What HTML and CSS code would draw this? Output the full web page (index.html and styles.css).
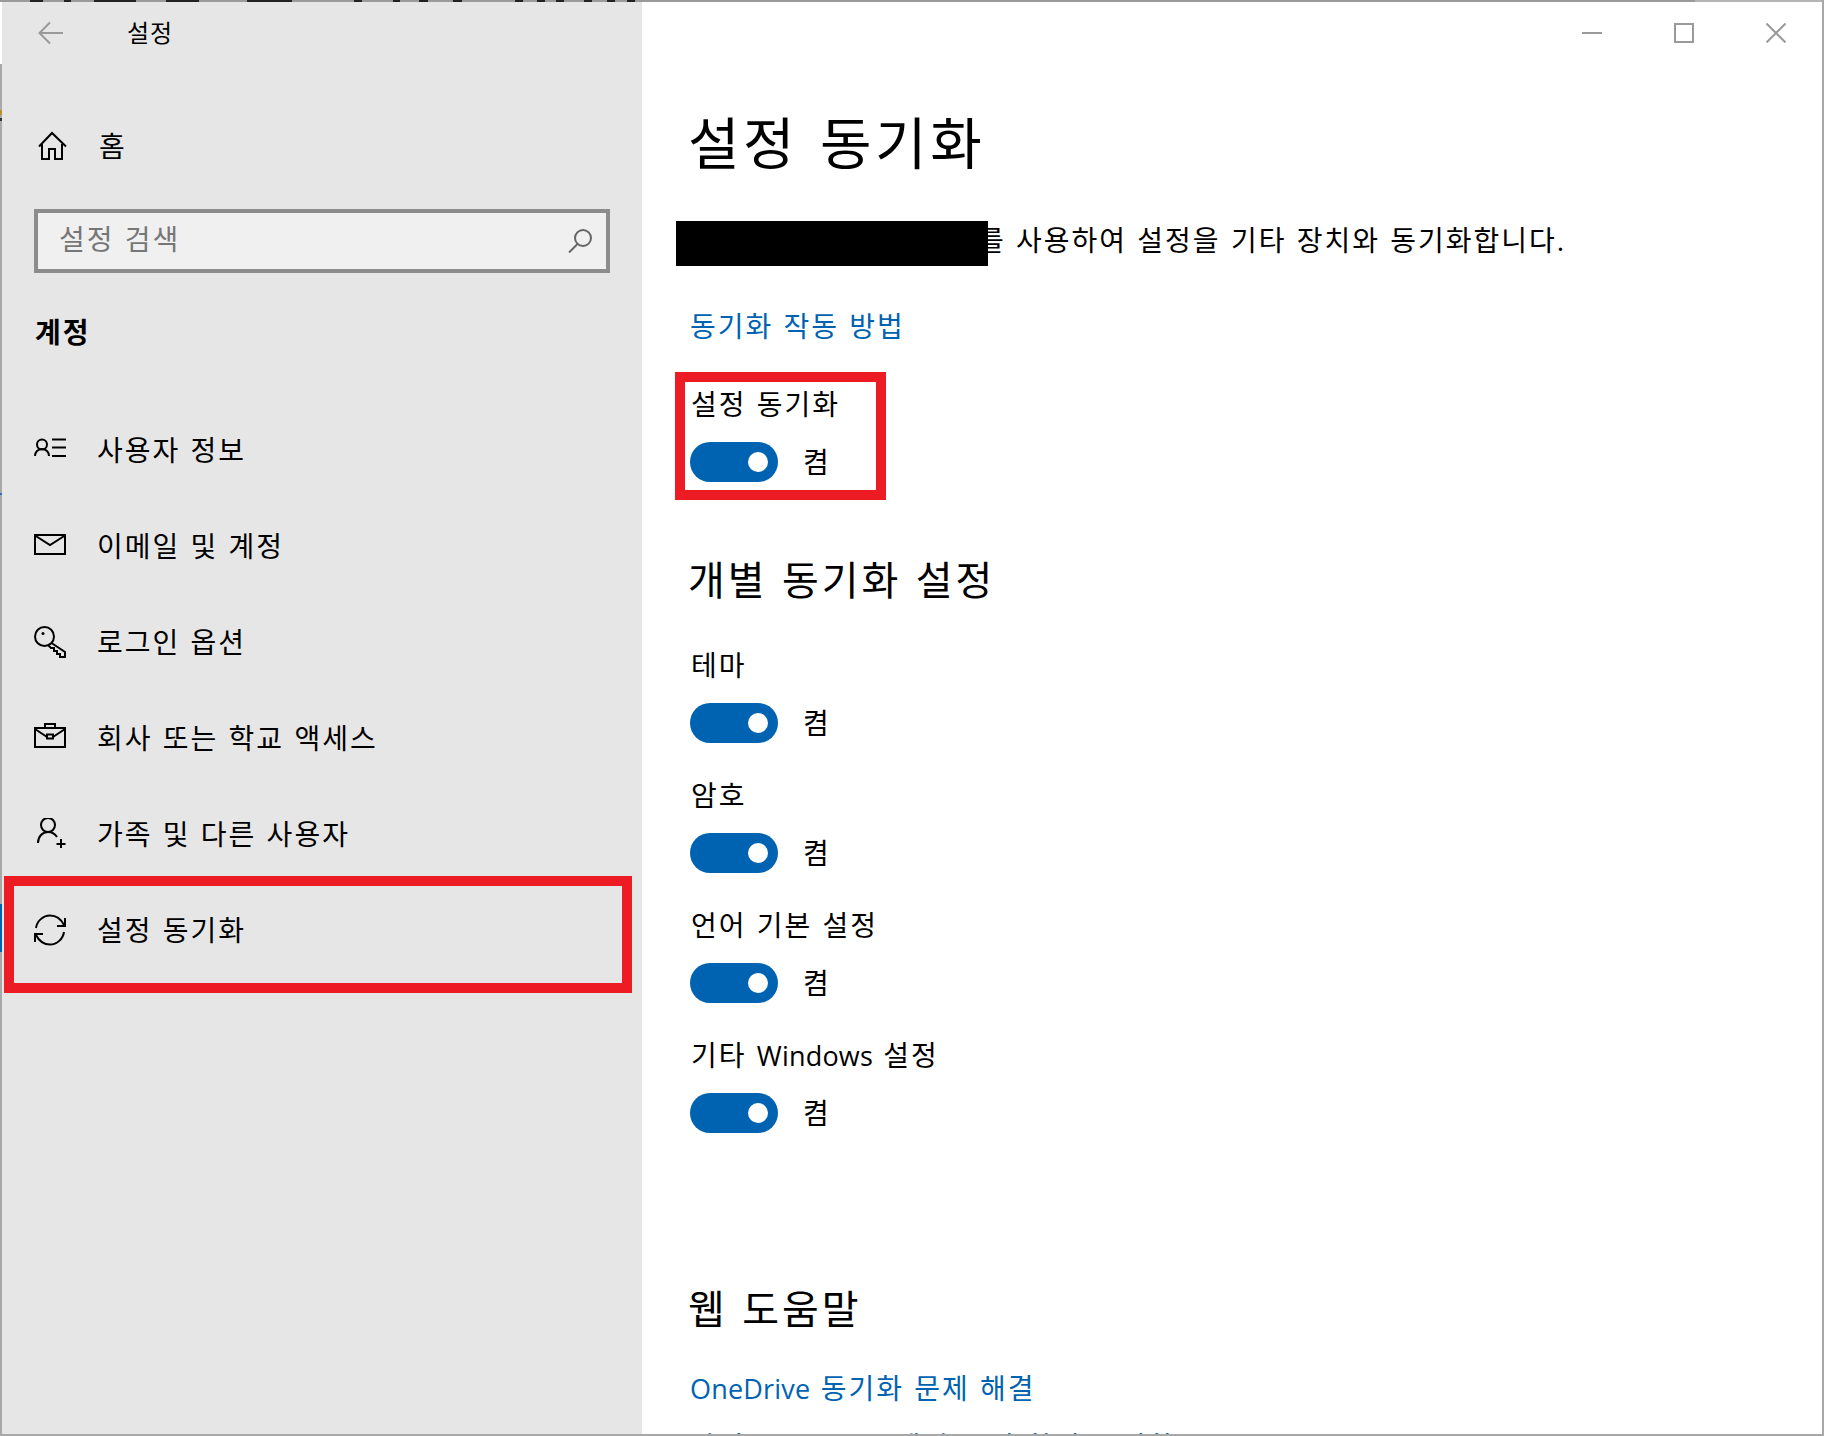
FILE: index.html
```html
<!DOCTYPE html>
<html lang="ko">
<head>
<meta charset="utf-8">
<title>설정</title>
<link rel="stylesheet" href="styles.css">
</head>
<body>
<div class="window">
  <div class="top-edge"></div>
  <div class="left-edge"><div class="left-white"></div><div class="left-gray"></div></div>
  <aside class="sidebar">
    <div class="titlebar">
      <svg class="back" viewBox="0 0 26 24"><path d="M25 12H2M12 1.500 1.500 12 12 22.500"/></svg>
      <span class="app-title">설정</span>
    </div>
    <div class="home-row">
      <svg class="icon" viewBox="0 0 32 32"><path d="M3 16.500 16 3l14 13.500M6 14v15h7V19h6v10h7V14"/></svg>
      <span class="nav-label">홈</span>
    </div>
    <div class="search">
      <span class="search-text">설정 검색</span>
      <svg class="search-icon" viewBox="0 0 24 24"><circle cx="15" cy="9" r="8"/><path d="M9.500 15 1 23.500"/></svg>
    </div>
    <h2 class="group-title">계정</h2>
    <nav class="nav">
      <div class="nav-item">
        <svg class="icon" viewBox="0 0 32 32"><circle cx="8" cy="10.500" r="5"/><path d="M1 22c0-4 3-7 7-7s7 3 7 7M18 5.500h14M18 13.500h14M18 22h14"/></svg>
        <span class="nav-label">사용자 정보</span>
      </div>
      <div class="nav-item">
        <svg class="icon" viewBox="0 0 32 32"><rect x="1" y="5" width="30" height="19"/><path d="M1 5.500 16 15 31 5.500"/></svg>
        <span class="nav-label">이메일 및 계정</span>
      </div>
      <div class="nav-item">
        <svg class="icon" viewBox="0 0 32 32"><circle cx="10.500" cy="10.500" r="9.500"/><circle class="dot" cx="9" cy="7.500" r="1.500"/><path d="M17.500 17 31 26v5h-5v-3h-3v-3h-3v-3h-3l-3-3"/></svg>
        <span class="nav-label">로그인 옵션</span>
      </div>
      <div class="nav-item">
        <svg class="icon" viewBox="0 0 32 32"><rect x="1" y="6" width="30" height="19"/><path d="M11 6V2h10v4M1 7l12 8M31 7l-12 8"/><rect x="13" y="12.500" width="6" height="4"/></svg>
        <span class="nav-label">회사 또는 학교 액세스</span>
      </div>
      <div class="nav-item">
        <svg class="icon" viewBox="0 0 32 32"><circle cx="14" cy="7" r="7"/><path d="M4 25c0-6 4-11 10-11 4 0 7 2 9 5M27 21v9M22.500 26h9"/></svg>
        <span class="nav-label">가족 및 다른 사용자</span>
      </div>
      <div class="nav-item active">
        <svg class="icon" viewBox="0 0 32 32"><path d="M2 14C3 7 9 1.500 16 1.500c6 0 11 3.500 14 9.500M31 4v8h-8M30 18c-1 7-7 12.500-14 12.500-6 0-11-3.500-14-9.500M1 28v-8h8"/></svg>
        <span class="nav-label">설정 동기화</span>
      </div>
    </nav>
  </aside>
  <main class="content">
    <div class="captions">
      <svg class="cap" viewBox="0 0 20 20"><path d="M0 10h20"/></svg>
      <svg class="cap" viewBox="0 0 20 20"><rect x="1" y="1" width="18" height="18"/></svg>
      <svg class="cap" viewBox="0 0 20 20"><path d="M.500.500l19 19M19.500.500l-19 19"/></svg>
    </div>
    <h1 class="page-title">설정 동기화</h1>
    <div class="desc">
      <div class="redact"></div>
      <span class="desc-text">를 사용하여 설정을 기타 장치와 동기화합니다.</span>
    </div>
    <a class="link first-link">동기화 작동 방법</a>
    <div class="master">
      <div class="field-label">설정 동기화</div>
      <div class="toggle-row"><span class="toggle"><span class="knob"></span></span><span class="toggle-text">켬</span></div>
    </div>
    <h2 class="section-title section-sync">개별 동기화 설정</h2>
    <div class="field field-first">
      <div class="field-label">테마</div>
      <div class="toggle-row"><span class="toggle"><span class="knob"></span></span><span class="toggle-text">켬</span></div>
    </div>
    <div class="field">
      <div class="field-label">암호</div>
      <div class="toggle-row"><span class="toggle"><span class="knob"></span></span><span class="toggle-text">켬</span></div>
    </div>
    <div class="field">
      <div class="field-label">언어 기본 설정</div>
      <div class="toggle-row"><span class="toggle"><span class="knob"></span></span><span class="toggle-text">켬</span></div>
    </div>
    <div class="field">
      <div class="field-label">기타 <span class="latin">Windows</span> 설정</div>
      <div class="toggle-row"><span class="toggle"><span class="knob"></span></span><span class="toggle-text">켬</span></div>
    </div>
    <h2 class="section-title section-help">웹 도움말</h2>
    <a class="link help-link"><span class="latin">OneDrive</span> 동기화 문제 해결</a>
    <a class="link next-link">마이크로소프트 에지 즐겨 찾기 동기화</a>
  </main>
  <div class="right-edge"></div>
  <div class="bottom-edge"></div>
</div>
</body>
</html>
```

FILE: styles.css
```css
*, *::after { box-sizing: border-box; }
html, body { margin: 0; padding: 0; background: #fff; }
body {
  font-family: "Open Sans", "Noto Sans CJK KR", sans-serif;
  color: #000;
  overflow: hidden;
}
.window {
  position: relative;
  display: flex;
  width: 1824px;
  height: 1436px;
  overflow: hidden;
  background: #fff;
}
.top-edge {
  position: absolute;
  top: 0; left: 0; right: 0;
  height: 2px;
  z-index: 3;
  background:
    linear-gradient(90deg,
      #9a9a9a 0 30px, #222 30px 43px, #9a9a9a 43px 64px, #222 64px 71px, #9a9a9a 71px 94px,
      #222 94px 136px, #9a9a9a 136px 166px, #222 166px 199px, #9a9a9a 199px 247px, #222 247px 292px,
      #9a9a9a 292px 354px, #222 354px 362px, #9a9a9a 362px 393px, #222 393px 400px, #9a9a9a 400px 419px,
      #222 419px 428px, #9a9a9a 428px 453px, #222 453px 462px, #9a9a9a 462px 515px, #222 515px 523px,
      #9a9a9a 523px 537px, #222 537px 545px, #9a9a9a 545px 556px, #222 556px 564px, #9a9a9a 564px 584px,
      #222 584px 592px, #9a9a9a 592px 607px, #222 607px 615px, #9a9a9a 615px 627px, #222 627px 635px,
      #9a9a9a 635px 1695px, #b4b4b4 1695px 100%);
}
.left-edge { flex: 0 0 2px; display: flex; flex-direction: column; }
.left-white { height: 64px; background: #fff; }
.left-gray {
  flex: 1;
  background:
    linear-gradient(180deg,
      #a8a8a8 0 46px, #b8912f 46px 51px, #a8a8a8 51px 54px, #333 54px 57px, #a8a8a8 57px 429px,
      #2a6fb5 429px 431px, #a8a8a8 431px 840px, #0063b1 840px 888px, #a8a8a8 888px);
}
.right-edge {
  position: absolute;
  top: 0; right: 0; bottom: 0;
  width: 2px;
  background: #a8a8a8;
  z-index: 3;
}
.bottom-edge {
  position: absolute;
  left: 0; right: 0; bottom: 0;
  height: 2px;
  background: #a8a8a8;
  z-index: 3;
}

/* sidebar */
.sidebar {
  flex: 0 0 640px;
  background: #e6e6e6;
  display: flex;
  flex-direction: column;
}
.sidebar > * { flex: none; }
.titlebar {
  height: 64px;
  display: flex;
  align-items: center;
  padding-left: 36px;
  padding-top: 2px;
}
.back {
  width: 26px; height: 24px;
  fill: none; stroke: #999; stroke-width: 2;
  margin-right: 63px;
}
.app-title { font-size: 24px; line-height: 32px; letter-spacing: 1px; }
.icon {
  flex: none;
  width: 32px; height: 32px;
  fill: none; stroke: #000; stroke-width: 2;
}
.icon .dot { fill: #000; stroke: none; }
.home-row {
  margin-top: 34px;
  height: 96px;
  display: flex;
  align-items: center;
  padding-left: 34px;
}
.nav-label { font-size: 28px; line-height: 40px; margin-left: 31px; letter-spacing: 2px; word-spacing: 1px; }
.search {
  margin: 15px 0 0 32px;
  width: 576px;
  height: 64px;
  border: 4px solid #8c8c8c;
  background: #f0f0f0;
  display: flex;
  align-items: center;
  justify-content: space-between;
  padding: 0 14px 4px 21px;
}
.search-text { font-size: 28px; line-height: 40px; color: #767676; letter-spacing: 2px; word-spacing: 1px; }
.search-icon { width: 24px; height: 24px; fill: none; stroke: #666; stroke-width: 2; margin-top: 4px; }
.group-title {
  margin: 39px 0 0 33px;
  font-size: 28px;
  line-height: 40px;
  font-weight: 700;
  letter-spacing: 2px;
}
.nav { margin-top: 50px; display: flex; flex-direction: column; }
.nav-item {
  position: relative;
  height: 96px;
  display: flex;
  align-items: center;
  padding-left: 32px;
}
.active::after {
  content: "";
  position: absolute;
  top: -6px; left: 2px; right: 10px; bottom: -15px;
  border: 10px solid #ed1c24;
}

/* content */
.content {
  flex: 1;
  min-width: 0;
  display: flex;
  flex-direction: column;
  align-items: flex-start;
  padding-left: 48px;
}
.content > * { flex: none; }
.captions {
  align-self: stretch;
  height: 64px;
  display: flex;
  align-items: center;
  justify-content: flex-end;
  gap: 72px;
  padding: 2px 38px 0 0;
}
.cap { width: 20px; height: 20px; fill: none; stroke: #9a9a9a; stroke-width: 2; }
.page-title {
  margin: 38px 0 0 -2px;
  height: 80px;
  font-size: 56px;
  line-height: 80px;
  font-weight: 400;
  letter-spacing: 3.5px;
  word-spacing: 4px;
}
.desc {
  margin: 33px 0 0 -14px;
  height: 50px;
  display: flex;
  align-items: flex-start;
}
.redact {
  position: relative;
  z-index: 1;
  width: 312px;
  height: 45px;
  margin-top: 6px;
  background: #000;
}
.desc-text {
  margin-left: -10px;
  font-size: 28px;
  line-height: 50px;
  letter-spacing: 2px;
  word-spacing: 1px;
  white-space: nowrap;
}
.link {
  display: block;
  height: 40px;
  font-size: 28px;
  line-height: 40px;
  color: #0063b1;
  letter-spacing: 2px;
  word-spacing: 1px;
  white-space: nowrap;
}
.first-link { margin-top: 41px; }
.help-link { margin-top: 34px; }
.next-link { margin-top: 18px; }
.master { position: relative; margin-top: 38px; }
.master::after {
  content: "";
  position: absolute;
  top: -12px; left: -15px; width: 211px; height: 128px;
  border: 10px solid #ed1c24;
}
.field-label {
  height: 40px;
  font-size: 28px;
  line-height: 40px;
  padding-left: 1px;
  letter-spacing: 2px;
  word-spacing: 1px;
}
.latin { font-size: 27px; letter-spacing: 0.2px; }
.toggle-row {
  margin-top: 18px;
  height: 40px;
  display: flex;
  align-items: center;
}
.toggle {
  position: relative;
  width: 88px; height: 40px;
  border-radius: 20px;
  background: #0063b1;
  display: flex;
  align-items: center;
  justify-content: flex-end;
  padding-right: 10px;
}
.knob { width: 20px; height: 20px; border-radius: 50%; background: #fff; }
.toggle-text { margin-left: 25px; font-size: 28px; line-height: 40px; }
.section-title {
  margin: 0 0 0 -2px;
  height: 50px;
  font-size: 40px;
  line-height: 50px;
  font-weight: 400;
  letter-spacing: 3px;
  word-spacing: 1px;
}
.section-sync { margin-top: 73px; }
.section-help { margin-top: 151px; }
.field { margin-top: 32px; }
.field-first { margin-top: 40px; }
```
